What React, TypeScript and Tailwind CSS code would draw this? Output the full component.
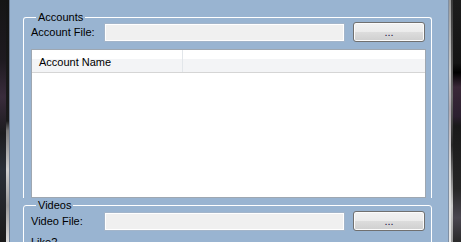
import React from "react";

function FileRow({ label }: { label: string }) {
  return (
    <div className="flex items-end h-[20px]">
      <div className="w-[73px] self-center text-[11px] leading-[13px] text-black whitespace-nowrap">{label}</div>
      <div className="w-[241px] h-[19px] border border-[#a3b5ca] bg-[#f0f0f0] shadow-[inset_0_0_0_1px_#ffffff]" />
      <button className="ml-[8px] w-[72px] h-[20px] border border-[#707070] rounded-[3px] bg-[linear-gradient(to_bottom,#f2f2f2_0%,#ebebeb_50%,#dddddd_50%,#cfcfcf_100%)] shadow-[inset_0_0_0_1px_#fbfbfb] flex items-center justify-center text-[11px] leading-[11px] text-[#1a1440] pt-[1px]">
        ...
      </button>
    </div>
  );
}

export default function App() {
  return (
    <div
      className="w-[461px] h-[242px] flex overflow-hidden"
      style={{ fontFamily: '"Liberation Sans", Arial, sans-serif' }}
    >
      {/* left window frame strip */}
      <div className="w-[10px] h-full flex">
        <div className="w-[6px] h-full bg-[linear-gradient(to_bottom,#151515_0%,#1e1a20_25%,#3a2c3c_40%,#1c1c1e_55%,#2a2f38_70%,#1a1a1a_100%)]" />
        <div className="w-[3px] h-full bg-[linear-gradient(to_bottom,#141414_0%,#1a1a1a_50%,#7c7c7c_54%,#cfcfcf_70%,#9a9a9a_85%,#dcdcdc_100%)]" />
        <div className="w-[1px] h-full bg-[#6f7f94]" />
      </div>

      {/* form client area */}
      <div className="flex-1 h-full bg-[#99b4d1] pl-[13px] pr-[16px] pt-[11px] flex flex-col">
        <fieldset className="border border-white border-b-0 rounded-t-[3px] pl-[7px] pr-[5px] pb-0 m-0 min-w-0">
          <legend className="ml-[5px] px-[2px] text-[11px] leading-[13px] text-black">Accounts</legend>
          <div className="-mt-[2px]">
            <FileRow label="Account File:" />
          </div>
          <div className="mt-[7px] h-[149px] border border-[#9ea7b1] bg-white flex flex-col">
            <div className="h-[23px] flex border-b border-[#d5d5d5] bg-[linear-gradient(to_bottom,#ffffff_0%,#ffffff_40%,#f3f4f6_40%,#f3f4f6_100%)]">
              <div className="w-[151px] h-full border-r border-[#e2e6ea] pl-[7px] pt-[2px] flex items-center text-[11px] leading-[13px] text-black">
                Account Name
              </div>
              <div className="flex-1" />
            </div>
          </div>
        </fieldset>

        <fieldset className="mt-[1px] border border-white rounded-t-[3px] pl-[7px] pr-[5px] m-0 min-w-0">
          <legend className="ml-[5px] px-[2px] text-[11px] leading-[13px] text-black">Videos</legend>
          <div className="-mt-[1px]">
            <FileRow label="Video File:" />
          </div>
          <div className="mt-[5px] text-[11px] leading-[13px] text-black">Like?</div>
        </fieldset>
      </div>

      {/* right window frame strip */}
      <div className="w-[13px] h-full flex">
        <div className="w-[1px] h-full bg-[#7f8fa3]" />
        <div className="w-[2px] h-full bg-[linear-gradient(to_bottom,#9a9a9a_0%,#c8c8c8_30%,#b0a8b0_45%,#d8d8d8_70%,#e8e8e8_100%)]" />
        <div className="w-[2px] h-full bg-[linear-gradient(to_bottom,#3a3a3a_0%,#6a6a6a_40%,#2a2a2a_60%,#c8c8c8_85%,#9a9a9a_100%)]" />
        <div className="flex-1 h-full bg-[linear-gradient(to_bottom,#1c1c1c_0%,#141414_26%,#000000_30%,#3a2838_36%,#2c2030_48%,#1a1a1a_52%,#262626_78%,#4a4650_90%,#2a2a2a_100%)]" />
      </div>
    </div>
  );
}
